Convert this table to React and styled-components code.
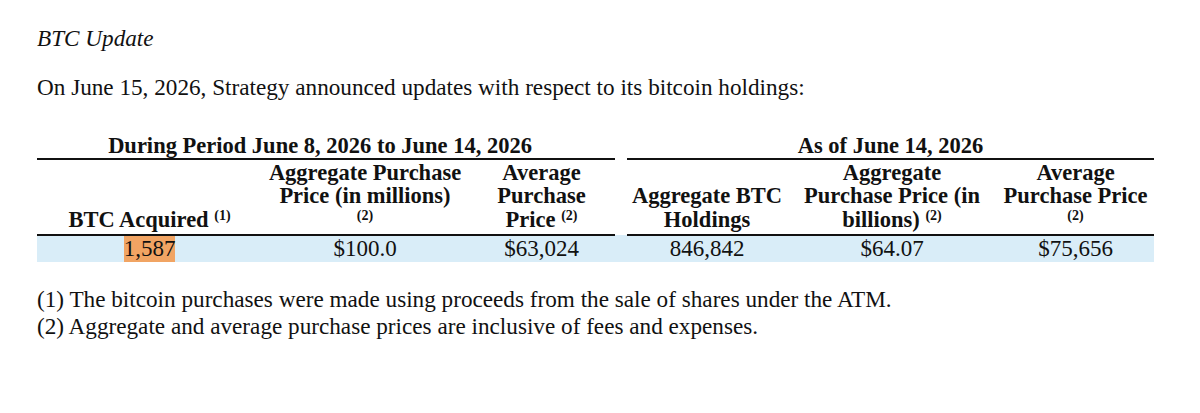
import React from "react";
import styled, { createGlobalStyle } from "styled-components";

const Global = createGlobalStyle`
  html, body { margin: 0; padding: 0; background: #fff; }
  body { font-family: "Liberation Serif", "Times New Roman", serif; color: #111; }
`;

const Page = styled.div`
  width: 1200px;
  height: 413px;
  box-sizing: border-box;
  padding: 25px 0 0 37px;
  display: flex;
  flex-direction: column;
`;

const Title = styled.div`
  font-style: italic;
  font-size: 23.2px;
  line-height: 26px;
`;

const Intro = styled.div`
  font-size: 23.2px;
  line-height: 26px;
  margin-top: 23px;
`;

const Table = styled.table`
  border-collapse: collapse;
  margin-top: 34px;
  font-size: 22.5px;
  width: 1117px;
  table-layout: fixed;
`;

const GroupCell = styled.th`
  font-weight: bold;
  text-align: center;
  white-space: nowrap;
  line-height: 23px;
  padding: 0 ${(p) => p.$shift || 0}px 1px 0;
  border-bottom: ${(p) => (p.$gap ? "none" : "2px solid #111")};
`;

const HeadCell = styled.th`
  font-weight: bold;
  text-align: center;
  vertical-align: bottom;
  white-space: nowrap;
  line-height: 23.5px;
  padding: 0.5px 0 3px;
  border-bottom: ${(p) => (p.$gap ? "none" : "2px solid #111")};
`;

const Sup = styled.sup`
  font-size: 14px;
  line-height: 0;
  vertical-align: 7px;
`;

const DataRow = styled.tr`
  background: #d9edf8;
`;

const DataCell = styled.td`
  text-align: center;
  font-size: 23px;
  line-height: 26px;
  padding: 0;
  height: 26px;
`;

const Highlight = styled.span`
  display: inline-block;
  background: #f1a463;
  padding: 0;
`;

const Notes = styled.div`
  margin-top: 24px;
  font-size: 23.2px;
  line-height: 27px;
`;

export default function App() {
  return (
    <>
      <Global />
      <Page>
        <Title>BTC Update</Title>
        <Intro>On June 15, 2026, Strategy announced updates with respect to its bitcoin holdings:</Intro>
        <Table>
          <colgroup>
            <col style={{ width: 225 }} />
            <col style={{ width: 206 }} />
            <col style={{ width: 147 }} />
            <col style={{ width: 12 }} />
            <col style={{ width: 160 }} />
            <col style={{ width: 210 }} />
            <col style={{ width: 157 }} />
          </colgroup>
          <thead>
            <tr>
              <GroupCell colSpan={3} $shift={12}>
                During Period June 8, 2026 to June 14, 2026
              </GroupCell>
              <GroupCell $gap />
              <GroupCell colSpan={3}>As of June 14, 2026</GroupCell>
            </tr>
            <tr>
              <HeadCell>
                BTC Acquired <Sup>(1)</Sup>
              </HeadCell>
              <HeadCell>
                Aggregate Purchase
                <br />
                Price (in millions)
                <br />
                <Sup>(2)</Sup>
              </HeadCell>
              <HeadCell>
                Average
                <br />
                Purchase
                <br />
                Price <Sup>(2)</Sup>
              </HeadCell>
              <HeadCell $gap />
              <HeadCell>
                Aggregate BTC
                <br />
                Holdings
              </HeadCell>
              <HeadCell>
                Aggregate
                <br />
                Purchase Price (in
                <br />
                billions) <Sup>(2)</Sup>
              </HeadCell>
              <HeadCell>
                Average
                <br />
                Purchase Price
                <br />
                <Sup>(2)</Sup>
              </HeadCell>
            </tr>
          </thead>
          <tbody>
            <DataRow>
              <DataCell>
                <Highlight>1,587</Highlight>
              </DataCell>
              <DataCell>$100.0</DataCell>
              <DataCell>$63,024</DataCell>
              <DataCell />
              <DataCell>846,842</DataCell>
              <DataCell>$64.07</DataCell>
              <DataCell>$75,656</DataCell>
            </DataRow>
          </tbody>
        </Table>
        <Notes>
          <div>(1) The bitcoin purchases were made using proceeds from the sale of shares under the ATM.</div>
          <div>(2) Aggregate and average purchase prices are inclusive of fees and expenses.</div>
        </Notes>
      </Page>
    </>
  );
}
